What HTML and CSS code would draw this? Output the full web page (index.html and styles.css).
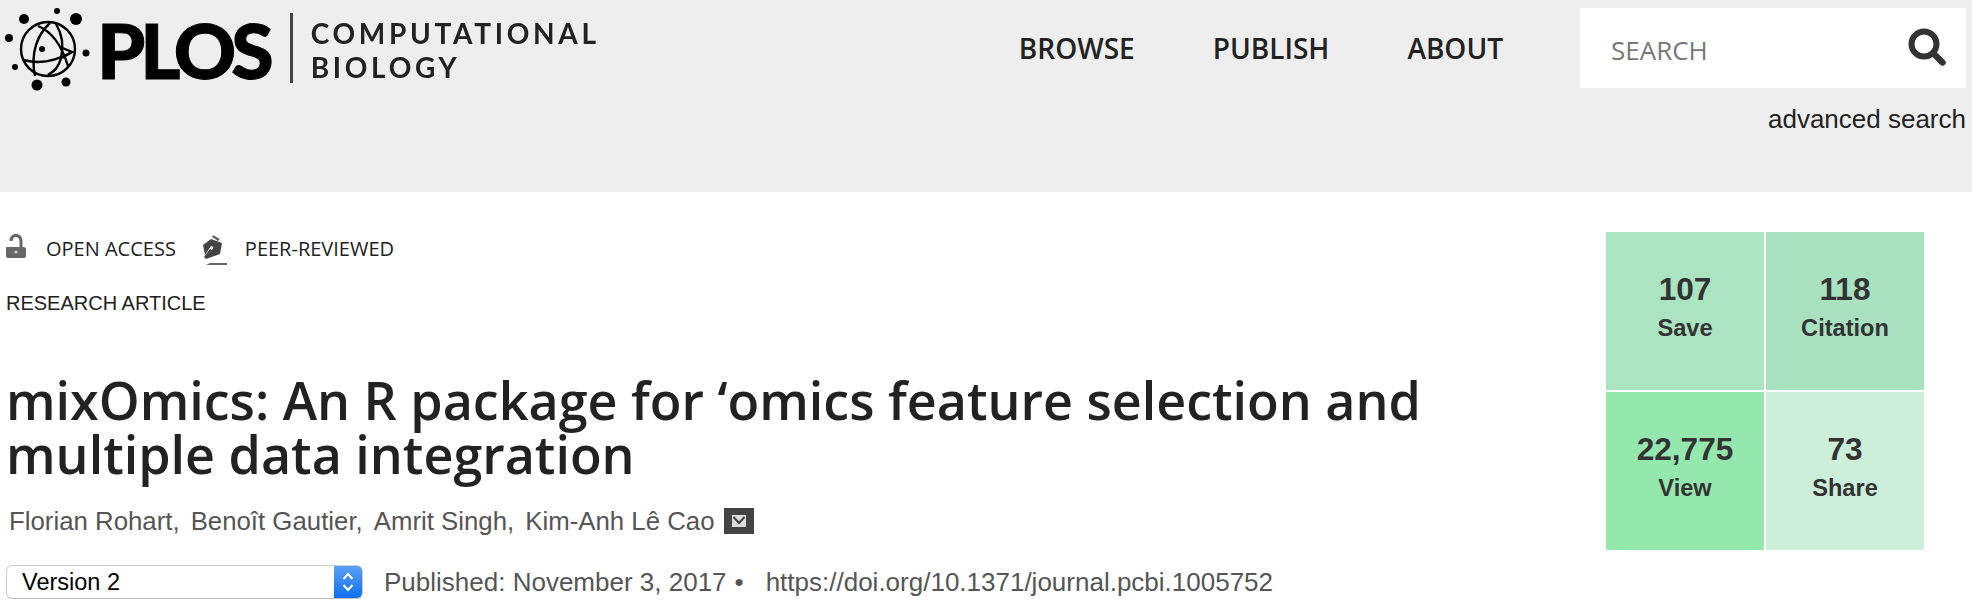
FILE: index.html
```html
<!DOCTYPE html>
<html lang="en">
<head>
  <meta charset="UTF-8">
  <title>mixOmics: An R package for 'omics feature selection and multiple data integration</title>
  <link rel="stylesheet" href="styles.css">
</head>
<body>
  <header class="site-header">
    <a class="logo" href="#">
      <svg class="logo-globe" width="92" height="96" viewBox="0 0 92 96">
        <g fill="#000">
          <circle cx="24" cy="19" r="5"/>
          <circle cx="57" cy="11" r="3"/>
          <circle cx="76" cy="19" r="6"/>
          <circle cx="9" cy="38" r="4"/>
          <circle cx="86" cy="53" r="3.5"/>
          <circle cx="15" cy="67" r="3"/>
          <circle cx="37" cy="85" r="5.5"/>
          <circle cx="66" cy="82" r="4.5"/>
          <circle cx="42" cy="49" r="3"/>
        </g>
        <g fill="none" stroke="#000" stroke-width="2.4">
          <circle cx="48" cy="49" r="27"/>
          <path d="M50 23C38 34 30 52 35 76"/>
          <path d="M38 26C48 30 60 40 68 66"/>
          <path d="M56 24C62 34 64 46 61 58C58 70 52 72 48 75"/>
          <path d="M24 60C38 64 54 62 72 52"/>
          <path d="M60 47L72 52L62 58"/>
        </g>
      </svg>
      <span class="logo-plos">PLOS</span>
      <span class="logo-rule"></span>
      <span class="logo-journal">COMPUTATIONAL<br>BIOLOGY</span>
    </a>
    <nav class="main-nav">
      <a href="#">BROWSE</a>
      <a href="#">PUBLISH</a>
      <a href="#">ABOUT</a>
    </nav>
    <div class="search-col">
      <div class="search-box">
        <span class="search-text">SEARCH</span>
        <svg class="search-icon" width="38" height="38" viewBox="0 0 38 38">
          <circle cx="16" cy="16" r="12.5" fill="none" stroke="#333" stroke-width="6"/>
          <path d="M25 25L34.500 34.500" stroke="#333" stroke-width="6.500" stroke-linecap="round"/>
        </svg>
      </div>
      <a class="advanced" href="#">advanced search</a>
    </div>
  </header>

  <main class="article">
    <div class="article-left">
      <div class="badges">
        <svg class="badge-icon" width="20" height="24" viewBox="0 0 20 24">
          <path d="M1 13H13.500V7C13.500 4.500 12 3 10 3C8 3 6.500 4.500 6.500 7H3.500C3.500 2.500 6.500 0 10 0C13.500 0 16.500 2.500 16.500 7V13H18C19 13 20 14 20 15V22C20 23 19 24 18 24H2C1 24 0 23 0 22V14C0 13.500 0.500 13 1 13Z" fill="#666"/>
          <circle cx="10" cy="18" r="1.600" fill="#ccc"/>
        </svg>
        <span class="badge-label first">OPEN ACCESS</span>
        <svg class="badge-icon pen" width="24" height="30" viewBox="0 0 24 30">
          <path d="M10 0L17 4L15 6L9 2Z" fill="#666"/>
          <path d="M8 4L19 8L17 19L3 24L1 22L7 14L9 15L10.500 12L8 11L2 20L0 10Z" fill="#444"/>
          <path d="M7 28H24V30H3Z" fill="#666"/>
        </svg>
        <span class="badge-label last">PEER-REVIEWED</span>
      </div>
      <div class="article-type">RESEARCH ARTICLE</div>
      <h1 class="title">mixOmics: An R package for ‘omics feature selection and multiple data integration</h1>
      <ul class="authors">
        <li>Florian Rohart,</li>
        <li>Benoît Gautier,</li>
        <li>Amrit Singh,</li>
        <li>Kim-Anh Lê Cao</li>
        <li class="mail">
          <svg width="30" height="26" viewBox="0 0 30 26">
            <rect width="30" height="26" fill="#444"/>
            <rect x="8" y="7" width="14" height="12" fill="#ddd"/>
            <path d="M9.500 9L15 15L20.500 9" fill="none" stroke="#444" stroke-width="2"/>
          </svg>
        </li>
      </ul>
      <div class="pub-row">
        <div class="version-select">
          <span class="version-text">Version 2</span>
          <span class="version-arrows">
            <svg width="14" height="24" viewBox="0 0 14 24">
              <path d="M2.500 9L7 4L11.500 9M2.500 15L7 20L11.500 15" fill="none" stroke="#fff" stroke-width="2"/>
            </svg>
          </span>
        </div>
        <span class="pub-date">Published: November 3, 2017</span>
        <span class="pub-dot">•</span>
        <span class="pub-doi">https://doi.org/10.1371/journal.pcbi.1005752</span>
      </div>
    </div>
    <aside class="metrics">
      <a class="metric save" href="#"><strong>107</strong><span>Save</span></a>
      <a class="metric citation" href="#"><strong>118</strong><span>Citation</span></a>
      <a class="metric view" href="#"><strong>22,775</strong><span>View</span></a>
      <a class="metric share" href="#"><strong>73</strong><span>Share</span></a>
    </aside>
  </main>
</body>
</html>
```

FILE: styles.css
```css
/* General styles */
body {
  margin: 0;
  background-color: #fff;
  color: #222;
  font-family: "Liberation Sans", Arial, sans-serif;
  overflow: hidden;
}

a {
  color: inherit;
  text-decoration: none;
}

/* Header */
.site-header {
  display: flex;
  align-items: flex-start;
  height: 192px;
  background-color: #eee;
}

.logo {
  display: flex;
  align-items: flex-start;
  height: 96px;
  color: #000;
  font-family: Lato, sans-serif;
  filter: blur(0.5px);
}

.logo-globe {
  flex: none;
  margin-right: 3px;
}

.logo-plos {
  margin-left: 2px;
  font-size: 77px;
  font-weight: 900;
  line-height: 98px;
  letter-spacing: -5px;
  -webkit-text-stroke: 1px #000;
}

.logo-rule {
  width: 3px;
  height: 70px;
  margin: 13px 18px 0 21px;
  background-color: #444;
}

.logo-journal {
  margin-top: 16px;
  font-size: 28px;
  font-weight: 700;
  line-height: 34px;
  letter-spacing: 3.700px;
  color: #222;
}

.main-nav {
  display: flex;
  gap: 78px;
  margin-left: auto;
  margin-right: 77px;
  padding-top: 28px;
  font-family: "Open Sans", sans-serif;
  font-size: 28px;
  font-weight: 600;
  line-height: 40px;
  color: #222;
}

.search-col {
  width: 386px;
  margin-right: 6px;
  padding-top: 8px;
}

.search-box {
  display: flex;
  align-items: center;
  justify-content: space-between;
  height: 80px;
  padding: 0 20px 0 31px;
  background-color: #fff;
}

.search-text {
  padding-top: 3px;
  font-family: "Open Sans", sans-serif;
  font-size: 26px;
  color: #777;
}

.search-icon {
  margin-bottom: 3px;
}

.advanced {
  display: block;
  margin-top: 16px;
  font-size: 26px;
  line-height: 30px;
  text-align: right;
}

/* Article head */
.article {
  display: flex;
  justify-content: space-between;
}

.article-left {
  padding: 41px 0 0 6px;
}

.badges {
  display: flex;
  align-items: flex-start;
  height: 32px;
}

.badge-icon {
  flex: none;
  margin-top: 1px;
}

.badge-icon.pen {
  margin-top: 2px;
}

.badge-label {
  margin-top: 2px;
  margin-left: 20px;
  font-family: "Open Sans", sans-serif;
  font-size: 20px;
  line-height: 28px;
  color: #222;
}

.badge-label.first {
  margin-right: 27px;
}

.badge-label.last {
  margin-left: 18px;
}

.article-type {
  margin-top: 26px;
  font-size: 20px;
  line-height: 24px;
  color: #222;
}

.title {
  width: 1480px;
  margin: 58px 0 0;
  font-family: "Open Sans", sans-serif;
  font-size: 52px;
  font-weight: 600;
  line-height: 54px;
  color: #222;
}

.authors {
  display: flex;
  align-items: center;
  gap: 11px;
  margin: 26px 0 0 3px;
  padding: 0;
  list-style: none;
  font-size: 25.800px;
  line-height: 28px;
  color: #555;
}

.authors .mail {
  display: flex;
  margin-left: -2px;
}

.pub-row {
  display: flex;
  align-items: center;
  margin-top: 30px;
  font-size: 26px;
  color: #555;
}

.version-select {
  display: flex;
  justify-content: space-between;
  width: 357px;
  height: 34px;
  box-sizing: border-box;
  border: 1px solid #ccc;
  border-bottom-color: #bbb;
  border-radius: 6px;
  background-color: #fff;
  overflow: hidden;
}

.version-text {
  padding-left: 15px;
  font-size: 23.500px;
  line-height: 32px;
  color: #000;
}

.version-arrows {
  display: flex;
  align-items: center;
  justify-content: center;
  width: 28px;
  background: linear-gradient(#5aa0f8, #0f6ff0);
}

.pub-date {
  margin-left: 21px;
}

.pub-dot {
  margin-left: 8px;
}

.pub-doi {
  margin-left: 22px;
}

/* Metrics tiles */
.metrics {
  display: grid;
  grid-template-columns: 158px 158px;
  grid-auto-rows: 158px;
  gap: 2px;
  margin: 40px 48px 0 0;
}

.metric {
  display: flex;
  flex-direction: column;
  align-items: center;
  padding-top: 39px;
  font-weight: bold;
  color: #333;
}

.metric strong {
  font-size: 31.600px;
  line-height: 36px;
}

.metric span {
  margin-top: 3px;
  font-size: 23.600px;
  line-height: 36px;
}

.save {
  background-color: #aae4c1;
}

.citation {
  background-color: #a9e2c0;
}

.view {
  background-color: #94e8ad;
}

.share {
  background-color: #cbefd8;
}
```
